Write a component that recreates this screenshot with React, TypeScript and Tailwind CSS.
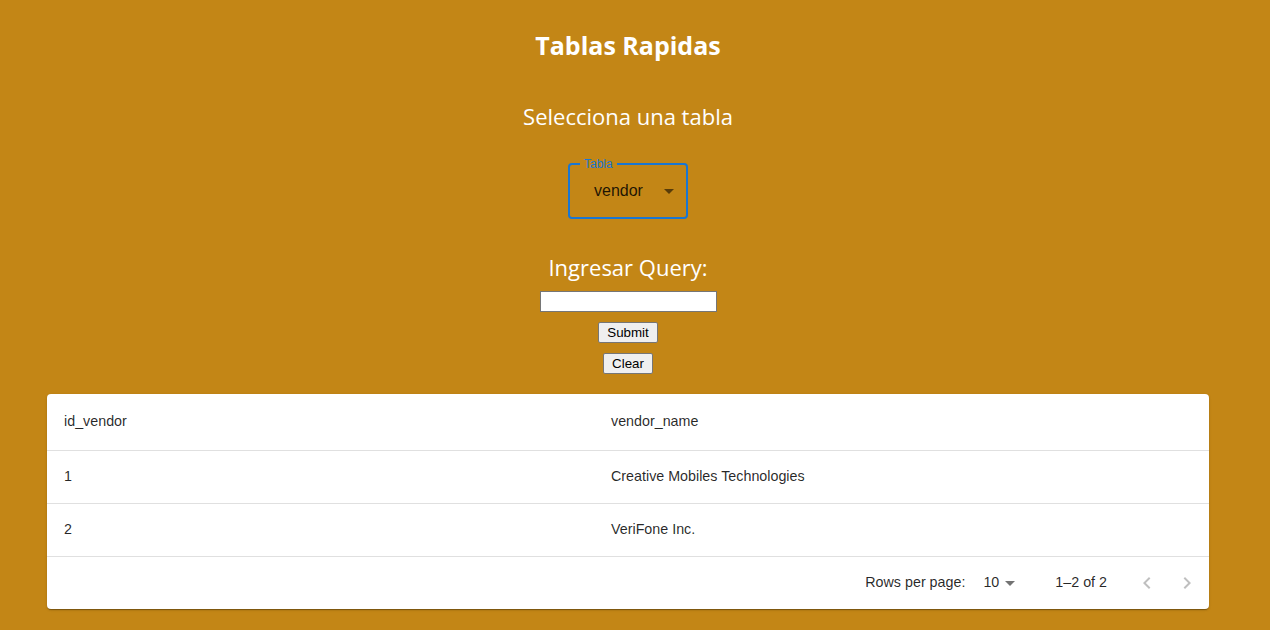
import { useState } from 'react';

const rows = [
  { id_vendor: 1, vendor_name: 'Creative Mobiles Technologies' },
  { id_vendor: 2, vendor_name: 'VeriFone Inc.' },
];

export default function App() {
  const [query, setQuery] = useState('');

  return (
    <div className="min-h-screen bg-[#c38616] pl-[47px] pr-[61px] pt-[28px] pb-6 font-['Open_Sans',sans-serif]">
      <h1 className="text-center text-[25px] leading-[34px] font-bold text-white">
        Tablas Rapidas
      </h1>

      <h2 className="mt-[40px] text-center text-[22px] leading-[28px] text-white">
        Selecciona una tabla
      </h2>

      <div className="mt-[33px] flex justify-center">
        <div className="relative h-[56px] w-[120px] rounded-[4px] border-2 border-[#1976d2]">
          <span className="absolute -top-[8px] left-[10px] bg-[#c38616] px-[4px] font-['Liberation_Sans',sans-serif] text-[12px] leading-[14px] text-[#1976d2]">
            Tabla
          </span>
          <div className="flex h-full items-center justify-between pl-[24px] pr-[5px] font-['Liberation_Sans',sans-serif] text-[16px] text-black/85">
            <span>vendor</span>
            <svg width="24" height="24" viewBox="0 0 24 24" className="fill-black/55">
              <path d="M7 10l5 5 5-5z" />
            </svg>
          </div>
        </div>
      </div>

      <h2 className="mt-[34px] text-center text-[22px] leading-[28px] text-white">
        Ingresar Query:
      </h2>

      <div className="mt-[10px] flex flex-col items-center">
        <input
          value={query}
          onChange={e => setQuery(e.target.value)}
          className="h-[21px] w-[177px] border border-[#767676] bg-white px-1 text-[13px]"
        />
        <button className="mt-[10px] h-[21px] rounded-[2px] border border-[#767676] bg-[#efefef] px-[8px] font-['Liberation_Sans',sans-serif] text-[13.33px] leading-[19px] text-black">
          Submit
        </button>
        <button
          onClick={() => setQuery('')}
          className="mt-[10px] h-[21px] rounded-[2px] border border-[#767676] bg-[#efefef] px-[8px] font-['Liberation_Sans',sans-serif] text-[13.33px] leading-[19px] text-black"
        >
          Clear
        </button>
      </div>

      <div className="mt-[20px] overflow-hidden rounded-[4px] bg-white font-['Liberation_Sans',sans-serif] text-[14.3px] text-black/85 shadow-[0_2px_1px_-1px_rgba(0,0,0,0.2),0_1px_1px_0_rgba(0,0,0,0.14),0_1px_3px_0_rgba(0,0,0,0.12)]">
        <div className="grid h-[57px] grid-cols-[547px_1fr] items-center border-b border-[#e0e0e0] px-[17px]">
          <span>id_vendor</span>
          <span>vendor_name</span>
        </div>
        {rows.map(r => (
          <div
            key={r.id_vendor}
            className="grid h-[53px] grid-cols-[547px_1fr] items-center border-b border-[#e0e0e0] px-[17px]"
          >
            <span>{r.id_vendor}</span>
            <span>{r.vendor_name}</span>
          </div>
        ))}
        <div className="flex h-[52px] items-center justify-end pr-[10px]">
          <span>Rows per page:</span>
          <div className="ml-[18px] flex items-center">
            <span>10</span>
            <svg width="24" height="24" viewBox="0 0 24 24" className="-ml-[1px] fill-black/55">
              <path d="M7 10l5 5 5-5z" />
            </svg>
          </div>
          <span className="ml-[33px]">1–2 of 2</span>
          <div className="ml-[28px] flex items-center gap-[16px]">
            <svg width="24" height="24" viewBox="0 0 24 24" className="fill-black/25">
              <path d="M15.41 7.41 14 6l-6 6 6 6 1.41-1.41L10.83 12z" />
            </svg>
            <svg width="24" height="24" viewBox="0 0 24 24" className="fill-black/25">
              <path d="M10 6 8.59 7.41 13.17 12l-4.58 4.59L10 18l6-6z" />
            </svg>
          </div>
        </div>
      </div>
    </div>
  );
}
